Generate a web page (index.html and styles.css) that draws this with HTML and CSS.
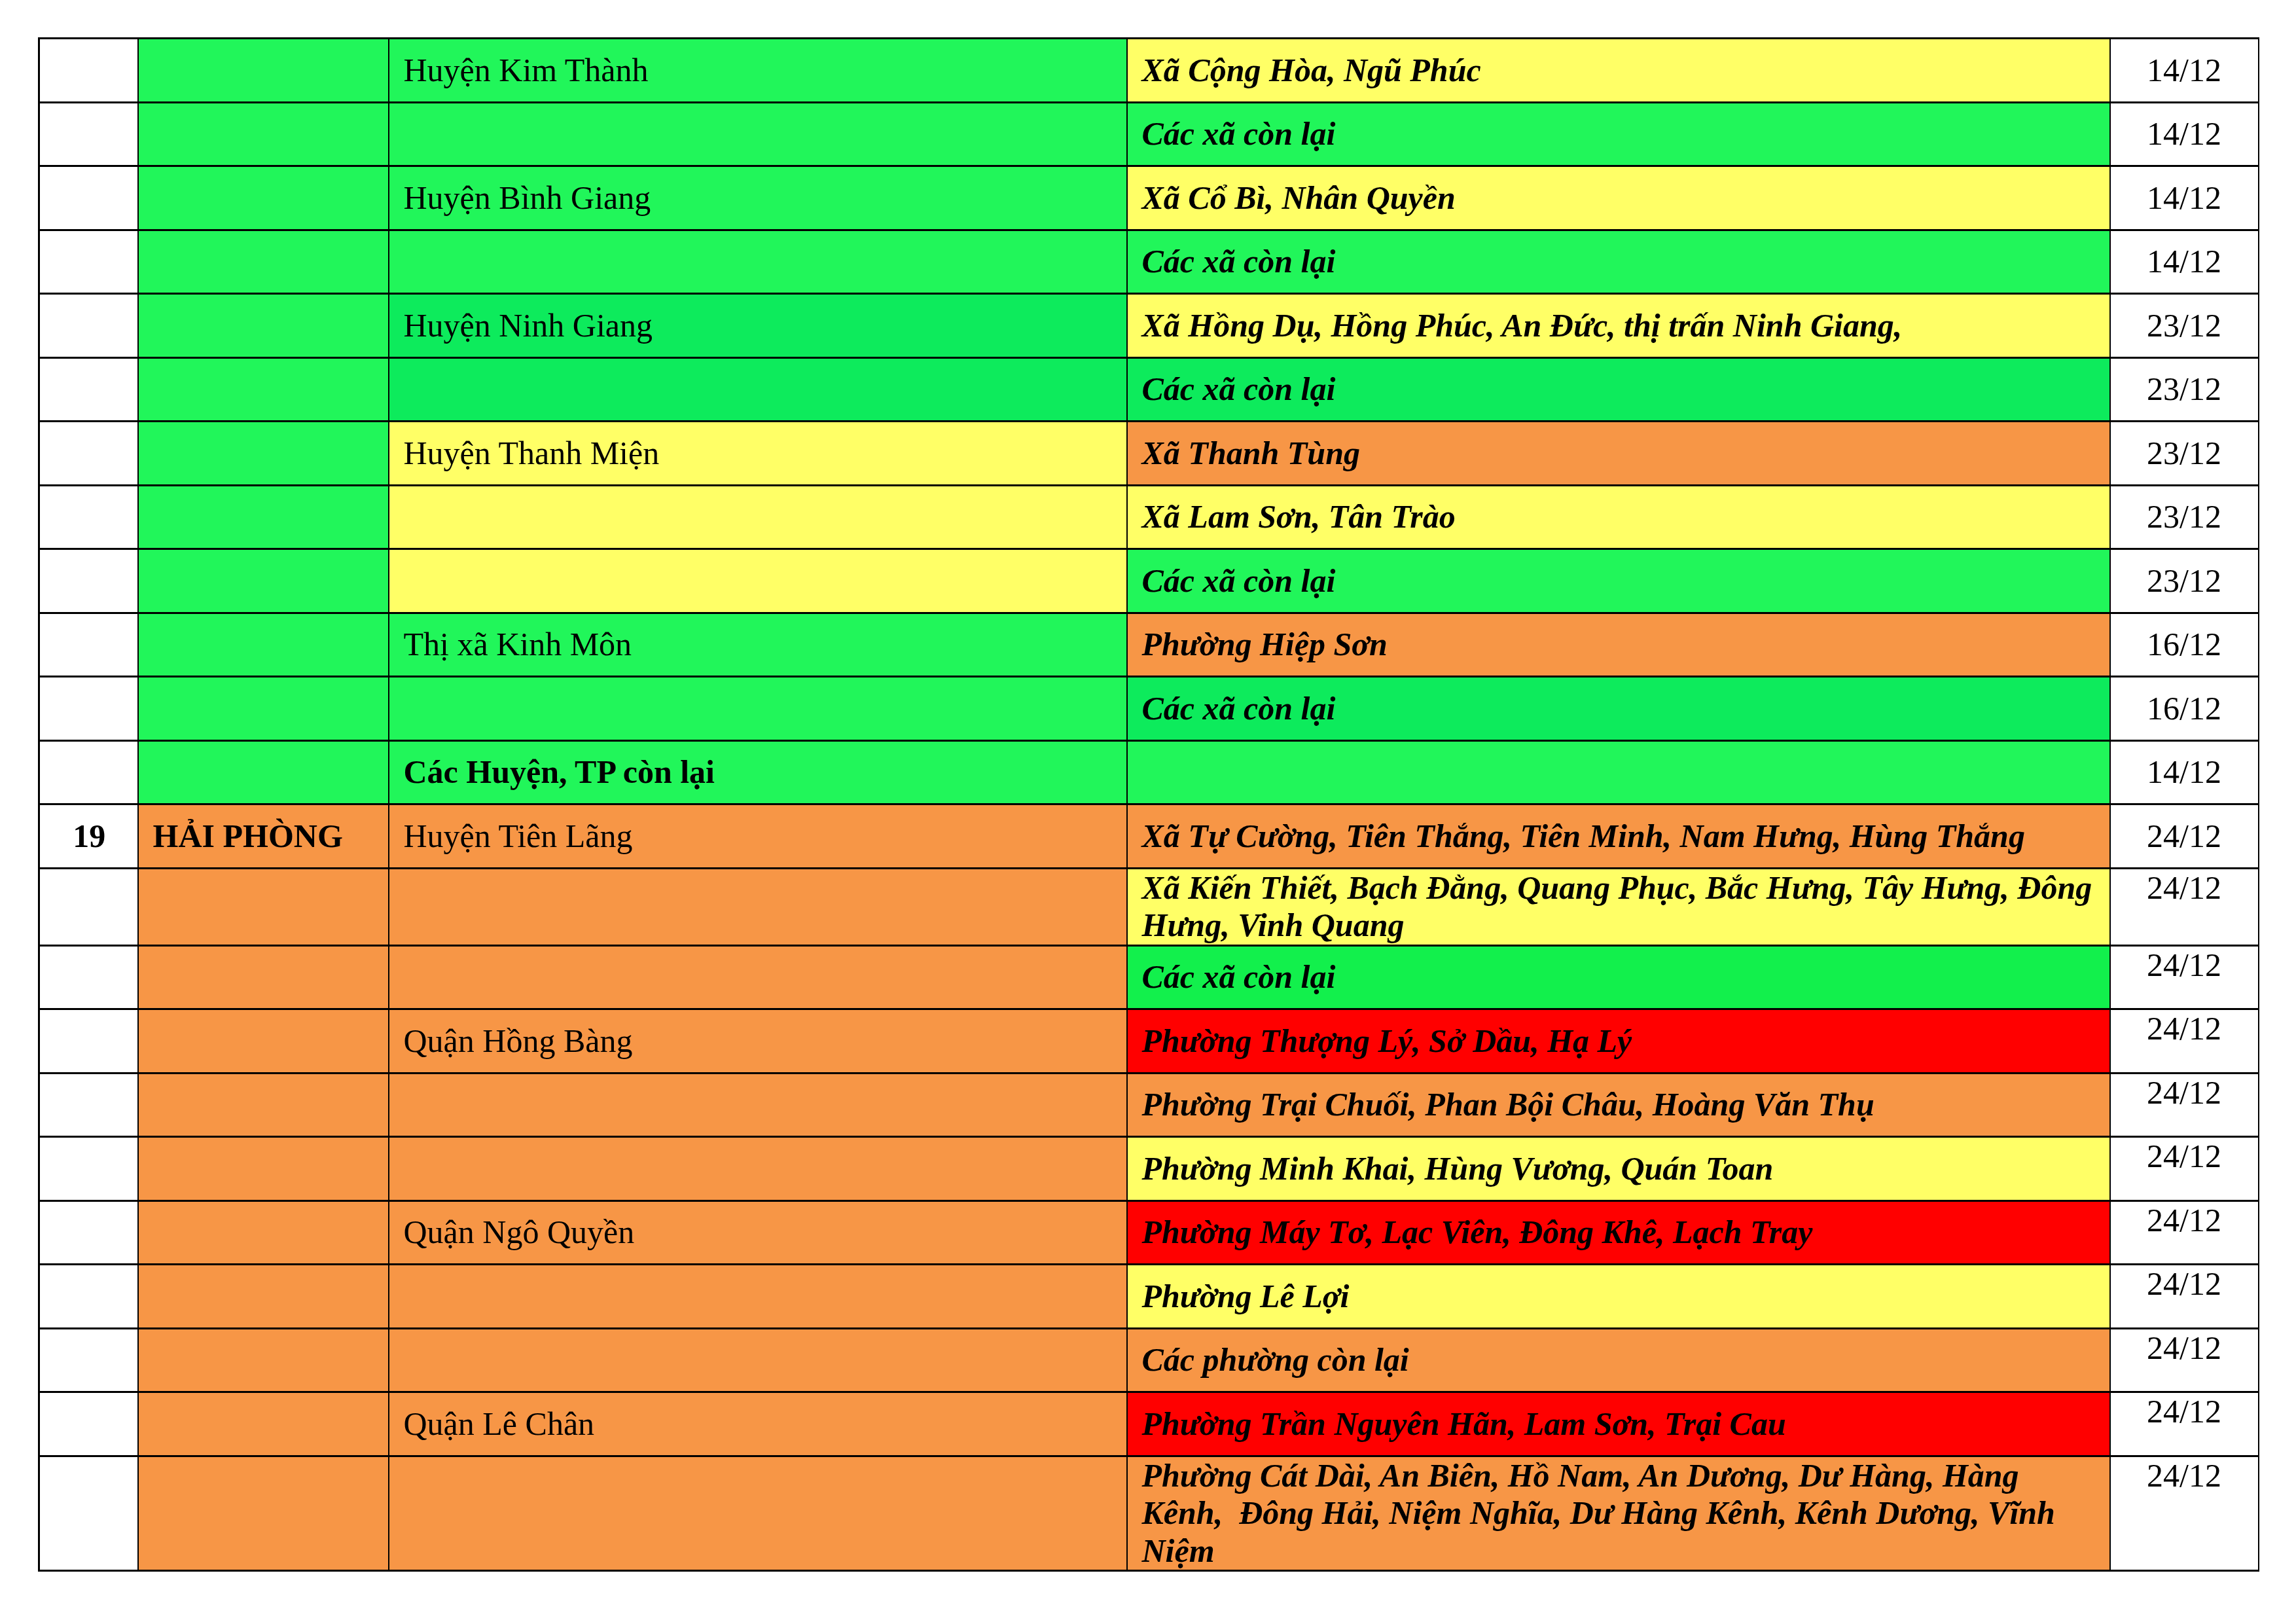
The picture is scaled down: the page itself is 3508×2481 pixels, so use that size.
FILE: index.html
```html
<!DOCTYPE html>
<html lang="vi">
<head>
<meta charset="utf-8">
<title>Bảng</title>
<link rel="stylesheet" href="styles.css">
</head>
<body>
<table class="sheet">
  <colgroup>
    <col class="c1"><col class="c2"><col class="c3"><col class="c4"><col class="c5">
  </colgroup>
  <tbody>
    <tr><td></td><td class="g"></td><td class="g">Huyện Kim Thành</td><td class="y ward">Xã Cộng Hòa, Ngũ Phúc</td><td class="date">14/12</td></tr>
    <tr><td></td><td class="g"></td><td class="g"></td><td class="g ward">Các xã còn lại</td><td class="date">14/12</td></tr>
    <tr><td></td><td class="g"></td><td class="g">Huyện Bình Giang</td><td class="y ward">Xã Cổ Bì, Nhân Quyền</td><td class="date">14/12</td></tr>
    <tr><td></td><td class="g"></td><td class="g"></td><td class="g ward">Các xã còn lại</td><td class="date">14/12</td></tr>
    <tr><td></td><td class="g"></td><td class="g2">Huyện Ninh Giang</td><td class="y ward">Xã Hồng Dụ, Hồng Phúc, An Đức, thị trấn Ninh Giang,</td><td class="date">23/12</td></tr>
    <tr><td></td><td class="g"></td><td class="g2"></td><td class="g2 ward">Các xã còn lại</td><td class="date">23/12</td></tr>
    <tr><td></td><td class="g"></td><td class="y">Huyện Thanh Miện</td><td class="o ward">Xã Thanh Tùng</td><td class="date">23/12</td></tr>
    <tr><td></td><td class="g"></td><td class="y"></td><td class="y ward">Xã Lam Sơn, Tân Trào</td><td class="date">23/12</td></tr>
    <tr><td></td><td class="g"></td><td class="y"></td><td class="g ward">Các xã còn lại</td><td class="date">23/12</td></tr>
    <tr><td></td><td class="g"></td><td class="g">Thị xã Kinh Môn</td><td class="o ward">Phường Hiệp Sơn</td><td class="date">16/12</td></tr>
    <tr><td></td><td class="g"></td><td class="g"></td><td class="g2 ward">Các xã còn lại</td><td class="date">16/12</td></tr>
    <tr><td></td><td class="g"></td><td class="g strong">Các Huyện, TP còn lại</td><td class="g"></td><td class="date">14/12</td></tr>
    <tr><td class="num">19</td><td class="o strong">HẢI PHÒNG</td><td class="o">Huyện Tiên Lãng</td><td class="o ward">Xã Tự Cường, Tiên Thắng, Tiên Minh, Nam Hưng, Hùng Thắng</td><td class="date">24/12</td></tr>
    <tr><td></td><td class="o"></td><td class="o"></td><td class="y ward top">Xã Kiến Thiết, Bạch Đằng, Quang Phục, Bắc Hưng, Tây Hưng, Đông Hưng, Vinh Quang</td><td class="date top">24/12</td></tr>
    <tr><td></td><td class="o"></td><td class="o"></td><td class="g3 ward">Các xã còn lại</td><td class="date top">24/12</td></tr>
    <tr><td></td><td class="o"></td><td class="o">Quận Hồng Bàng</td><td class="r ward">Phường Thượng Lý, Sở Dầu, Hạ Lý</td><td class="date top">24/12</td></tr>
    <tr><td></td><td class="o"></td><td class="o"></td><td class="o ward">Phường Trại Chuối, Phan Bội Châu, Hoàng Văn Thụ</td><td class="date top">24/12</td></tr>
    <tr><td></td><td class="o"></td><td class="o"></td><td class="y ward">Phường Minh Khai, Hùng Vương, Quán Toan</td><td class="date top">24/12</td></tr>
    <tr><td></td><td class="o"></td><td class="o">Quận Ngô Quyền</td><td class="r ward">Phường Máy Tơ, Lạc Viên, Đông Khê, Lạch Tray</td><td class="date top">24/12</td></tr>
    <tr><td></td><td class="o"></td><td class="o"></td><td class="y ward">Phường Lê Lợi</td><td class="date top">24/12</td></tr>
    <tr><td></td><td class="o"></td><td class="o"></td><td class="o ward">Các phường còn lại</td><td class="date top">24/12</td></tr>
    <tr><td></td><td class="o"></td><td class="o">Quận Lê Chân</td><td class="r ward">Phường Trần Nguyên Hãn, Lam Sơn, Trại Cau</td><td class="date top">24/12</td></tr>
    <tr><td></td><td class="o"></td><td class="o"></td><td class="o ward top">Phường Cát Dài, An Biên, Hồ Nam, An Dương, Dư Hàng, Hàng Kênh,&nbsp; Đông Hải, Niệm Nghĩa, Dư Hàng Kênh, Kênh Dương, Vĩnh Niệm</td><td class="date top">24/12</td></tr>
  </tbody>
</table>
</body>
</html>
```

FILE: styles.css
```css
html, body {
  margin: 0;
  padding: 0;
  background: #ffffff;
}

body {
  width: 3508px;
  height: 2481px;
  overflow: hidden;
  font-family: "Liberation Serif", "Times New Roman", serif;
  color: #000000;
}

.sheet {
  margin: 57px 0 0 58px;
  width: 3391px;
  table-layout: fixed;
  border-collapse: collapse;
  font-size: 50px;
  line-height: 1.15;
}

.c1 { width: 151px; }
.c2 { width: 383px; }
.c3 { width: 1128px; }
.c4 { width: 1502px; }
.c5 { width: 227px; }

.sheet tr {
  height: 97.5px;
}

.sheet td {
  border-top: 3px solid #000;
  border-bottom: 3px solid #000;
  border-left: 2px solid #000;
  border-right: 2px solid #000;
  padding: 0 20px 0 22px;
  vertical-align: middle;
  background: #ffffff;
}

.sheet td:first-child {
  border-left: 3px solid #000;
}

.g { background: #21f65a !important; }
.g2 { background: #0deb5c !important; }
.g3 { background: #12f04c !important; }
.y { background: #ffff66 !important; }
.o { background: #f79646 !important; }
.r { background: #ff0000 !important; }

.ward {
  font-weight: bold;
  font-style: italic;
}

.strong {
  font-weight: bold;
}

.num {
  font-weight: bold;
  text-align: center;
}

.sheet td.date {
  text-align: center;
  padding: 0 4px;
}

.sheet td.top {
  vertical-align: top;
}
```
